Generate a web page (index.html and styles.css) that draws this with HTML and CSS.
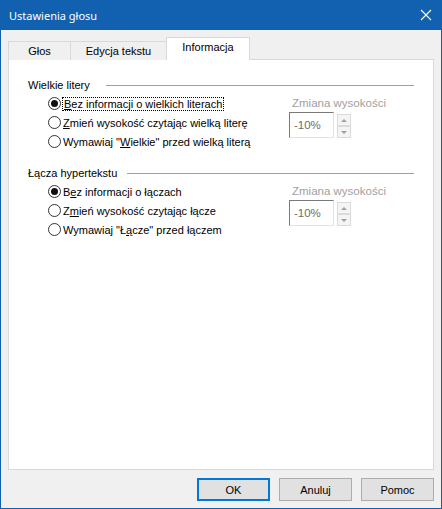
FILE: index.html
```html
<!DOCTYPE html>
<html lang="pl">
<head>
    <meta charset="UTF-8">
    <title>Ustawienia głosu</title>
    <link rel="stylesheet" href="styles.css">
</head>
<body>
    <div class="window">
        <div class="titlebar">
            <span class="title">Ustawienia głosu</span>
            <svg class="close" width="12" height="12" viewBox="0 0 12 12">
                <path d="M1 1 L11 11 M11 1 L1 11" stroke="#fff" stroke-width="1.1" fill="none"/>
            </svg>
        </div>

        <div class="client">
            <div class="tabs">
                <div class="tab tab-glos">Głos</div>
                <div class="tab tab-edycja">Edycja tekstu</div>
                <div class="tab tab-info active">Informacja</div>
            </div>

            <div class="panel">
                <div class="group">
                    <div class="group-title">
                        <span>Wielkie litery</span>
                        <span class="line line-1"></span>
                    </div>
                    <div class="group-body">
                        <div class="options">
                            <label class="option"><span class="radio checked"></span><span class="focus"><u>B</u>ez informacji o wielkich literach</span></label>
                            <label class="option"><span class="radio"></span><span><u>Z</u>mień wysokość czytając wielką literę</span></label>
                            <label class="option"><span class="radio"></span><span>Wymawiaj "<u>W</u>ielkie" przed wielką literą</span></label>
                        </div>
                        <div class="spin">
                            <div class="spin-label">Zmiana wysokości</div>
                            <div class="spin-row">
                                <div class="spin-edit">-10%</div>
                                <div class="spin-buttons">
                                    <div class="spin-btn"><span class="arrow up"></span></div>
                                    <div class="spin-btn"><span class="arrow down"></span></div>
                                </div>
                            </div>
                        </div>
                    </div>
                </div>

                <div class="group group-2">
                    <div class="group-title">
                        <span>Łącza hypertekstu</span>
                        <span class="line line-2"></span>
                    </div>
                    <div class="group-body">
                        <div class="options">
                            <label class="option"><span class="radio checked"></span><span>B<u>e</u>z informacji o łączach</span></label>
                            <label class="option"><span class="radio"></span><span>Z<u>m</u>ień wysokość czytając łącze</span></label>
                            <label class="option"><span class="radio"></span><span>Wymawiaj "Ł<u>ą</u>cze" przed łączem</span></label>
                        </div>
                        <div class="spin">
                            <div class="spin-label">Zmiana wysokości</div>
                            <div class="spin-row">
                                <div class="spin-edit">-10%</div>
                                <div class="spin-buttons">
                                    <div class="spin-btn"><span class="arrow up"></span></div>
                                    <div class="spin-btn"><span class="arrow down"></span></div>
                                </div>
                            </div>
                        </div>
                    </div>
                </div>
            </div>

            <div class="buttons">
                <button class="btn default">OK</button>
                <button class="btn">Anuluj</button>
                <button class="btn">Pomoc</button>
            </div>
        </div>
    </div>
</body>
</html>
```

FILE: styles.css
```css
* {
    margin: 0;
    padding: 0;
    box-sizing: border-box;
}

body {
    font-family: "Liberation Sans", Arial, sans-serif;
    font-size: 11px;
    color: #000;
    background-color: #fff;
}

.window {
    width: 442px;
    height: 509px;
    background-color: #1161b0;
    padding: 0 1px 1px 1px;
    display: flex;
    flex-direction: column;
}

.titlebar {
    height: 30px;
    display: flex;
    align-items: center;
    justify-content: space-between;
    padding: 0 9px 0 8px;
}

.title {
    font-family: "Noto Sans", sans-serif;
    font-size: 11px;
    color: #fff;
}

.close {
    display: block;
}

.client {
    flex: 1;
    background-color: #f0f0f0;
    padding: 8px 7px 0 7px;
}

/* tabs */
.tabs {
    display: flex;
    align-items: flex-end;
    height: 22px;
    margin-bottom: -1px;
}

.tab {
    height: 19px;
    border: 1px solid #d9d9d9;
    border-bottom: none;
    background-color: #f0f0f0;
    text-align: center;
    line-height: 18px;
    font-size: 11px;
}

.tab-glos {
    width: 63px;
}

.tab-edycja {
    width: 97px;
    margin-left: -1px;
}

.tab-info {
    width: 84px;
    margin-left: -1px;
}

.tab.active {
    height: 23px;
    background-color: #fff;
    line-height: 19px;
    z-index: 1;
}

/* page */
.panel {
    height: 411px;
    background-color: #fff;
    border: 1px solid #d9d9d9;
    padding: 15px 19px 0 19px;
}

.group-2 {
    margin-top: 12px;
}

.group-title {
    display: flex;
    align-items: center;
    height: 19px;
}

.line {
    flex: 1;
    border-top: 1px solid #a0a0a0;
    margin-top: 1px;
}

.line-1 {
    margin-left: 16px;
}

.line-2 {
    margin-left: 10px;
}

.group-body {
    display: flex;
}

.options {
    width: 261px;
    padding-left: 20px;
}

.option {
    display: flex;
    align-items: center;
    height: 19px;
    white-space: nowrap;
}

.radio {
    width: 13px;
    height: 13px;
    border: 1px solid #333;
    border-radius: 50%;
    background-color: #fff;
    margin-right: 2px;
    display: flex;
    align-items: center;
    justify-content: center;
}

.radio.checked::after {
    content: "";
    width: 7px;
    height: 7px;
    border-radius: 50%;
    background-color: #111;
}

.focus {
    outline: 1px dotted #000;
    padding: 0 1px;
}

.spin-label {
    height: 18px;
    line-height: 19px;
    padding-left: 3px;
    color: #a0a0a0;
    font-size: 11.5px;
}

.spin-row {
    display: flex;
    gap: 3px;
}

.spin-edit {
    width: 45px;
    height: 26px;
    border: 1px solid #e3e3e3;
    border-top-color: #7a7a7a;
    border-left-color: #7a7a7a;
    color: #6d6d6d;
    padding-left: 4px;
    line-height: 24px;
    font-size: 11.5px;
}

.spin-buttons {
    display: flex;
    flex-direction: column;
    padding-top: 2px;
}

.spin-btn {
    width: 14px;
    height: 12px;
    border: 1px solid #dcdcdc;
    background-color: #f4f4f4;
    display: flex;
    align-items: center;
    justify-content: center;
}

.arrow {
    width: 0;
    height: 0;
    border-left: 3px solid transparent;
    border-right: 3px solid transparent;
}

.arrow.up {
    border-bottom: 3px solid #a0a0a0;
}

.arrow.down {
    border-top: 3px solid #a0a0a0;
}

/* dialog buttons */
.buttons {
    display: flex;
    justify-content: flex-end;
    gap: 9px;
    margin-top: 8px;
}

.btn {
    width: 73px;
    height: 23px;
    font-family: "Liberation Sans", Arial, sans-serif;
    font-size: 11px;
    color: #000;
    background-color: #e1e1e1;
    border: 1px solid #adadad;
}

.btn.default {
    border: 2px solid #0078d7;
}
```
